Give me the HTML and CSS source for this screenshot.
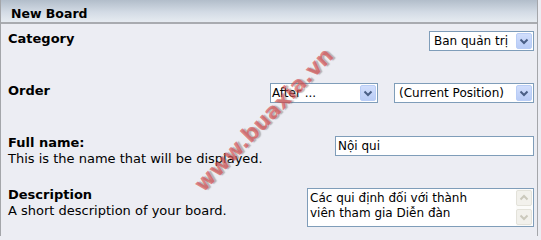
FILE: index.html
```html
<!DOCTYPE html>
<html lang="vi">
<head>
<meta charset="utf-8">
<title>New Board</title>
<link rel="stylesheet" href="styles.css">
</head>
<body>
<div class="panel">
  <div class="panel-head">New Board</div>

  <div class="row">
    <div class="label"><b>Category</b></div>
    <div class="select sel-cat"><span class="sel-text">Ban quản trị</span><span class="sel-btn"><svg width="16" height="16" viewBox="0 0 16 16"><path d="M4.5 6.5 L8 10 L11.5 6.5" fill="none" stroke="#4a5f86" stroke-width="2"/></svg></span></div>
  </div>

  <div class="row">
    <div class="label"><b>Order</b></div>
    <div class="controls">
      <div class="select sel-after"><span class="sel-text">After ...</span><span class="sel-btn"><svg width="16" height="16" viewBox="0 0 16 16"><path d="M4.5 6.5 L8 10 L11.5 6.5" fill="none" stroke="#4a5f86" stroke-width="2"/></svg></span></div>
      <div class="select sel-pos"><span class="sel-text">(Current Position)</span><span class="sel-btn"><svg width="16" height="16" viewBox="0 0 16 16"><path d="M4.5 6.5 L8 10 L11.5 6.5" fill="none" stroke="#4a5f86" stroke-width="2"/></svg></span></div>
    </div>
  </div>

  <div class="row">
    <div class="label"><b>Full name:</b><span class="hint">This is the name that will be displayed.</span></div>
    <div class="input">Nội qui</div>
  </div>

  <div class="row">
    <div class="label"><b>Description</b><span class="hint">A short description of your board.</span></div>
    <div class="textarea">
      <div class="ta-text">Các qui định đối với thành<br>viên tham gia Diễn đàn</div>
      <div class="ta-scroll">
        <span class="sb-btn"><svg width="14" height="14" viewBox="0 0 14 14"><path d="M3.5 8.5 L7 5 L10.5 8.5" fill="none" stroke="#cbc9bc" stroke-width="2"/></svg></span>
        <span class="sb-btn"><svg width="14" height="14" viewBox="0 0 14 14"><path d="M3.5 5.5 L7 9 L10.5 5.5" fill="none" stroke="#cbc9bc" stroke-width="2"/></svg></span>
      </div>
    </div>
  </div>

  <div class="watermark">www.buaxia.vn</div>
</div>
</body>
</html>
```

FILE: styles.css
```css
html, body {
  margin: 0;
  padding: 0;
  background: #ecedf3;
}

body {
  font-family: "DejaVu Sans", Verdana, sans-serif;
  color: #000;
}

.panel {
  position: relative;
  width: 538px;
  box-sizing: border-box;
  border-left: 1px solid #a4a6aa;
  border-right: 1px solid #a4a6aa;
  background: #ecedf3;
  height: 236px;
  overflow: hidden;
}

.panel-head {
  height: 24px;
  box-sizing: border-box;
  padding: 6px 0 0 10px;
  font-size: 12.5px;
  line-height: 16px;
  font-weight: bold;
  background: linear-gradient(#b2bdca, #d3dbe5 55%, #e6ebf1);
  border-bottom: 2px solid #a9abb0;
}

.row {
  display: flex;
  justify-content: space-between;
  align-items: flex-start;
  height: 52px;
  box-sizing: border-box;
  padding: 7px 3px 0 7px;
}

.label {
  display: flex;
  flex-direction: column;
  font-size: 13px;
  line-height: 16px;
}

.label b {
  font-weight: bold;
}

.hint {
  font-weight: normal;
}

.controls {
  display: flex;
  gap: 16px;
}

.select {
  display: flex;
  align-items: center;
  justify-content: space-between;
  height: 20px;
  box-sizing: border-box;
  border: 1px solid #7f9db9;
  background: #fff;
  font-size: 12px;
  line-height: 18px;
  padding-left: 4px;
}

.sel-cat { width: 105px; }
.sel-after { width: 108px; padding-left: 1px; }
.sel-pos { width: 140px; }

.sel-btn {
  display: flex;
  width: 16px;
  height: 16px;
  margin-right: 1px;
  box-sizing: border-box;
  border: 1px solid #b9cdf6;
  border-radius: 2px;
  background: linear-gradient(#d1defc, #b9ccf6);
}

.sel-btn svg {
  margin: -1px;
}

.input {
  width: 199px;
  height: 20px;
  margin-top: 1px;
  box-sizing: border-box;
  border: 1px solid #7f9db9;
  background: #fff;
  font-size: 12px;
  line-height: 16px;
  padding: 1px 2px;
}

.textarea {
  display: flex;
  justify-content: space-between;
  width: 227px;
  height: 39px;
  margin-top: 1px;
  box-sizing: border-box;
  border: 1px solid #7f9db9;
  background: #fff;
  font-size: 12px;
}

.ta-text {
  padding: 2px 0 0 2px;
  line-height: 15px;
}

.ta-scroll {
  display: flex;
  flex-direction: column;
  justify-content: space-between;
  width: 16px;
  padding: 1px 0;
  margin-right: 1px;
  background: #fbfbf9;
}

.sb-btn {
  display: flex;
  align-items: center;
  justify-content: center;
  width: 16px;
  height: 16px;
  box-sizing: border-box;
  border: 1px solid #e3e2da;
  border-radius: 2px;
  background: #f2f1ec;
}

.watermark {
  position: absolute;
  left: 163px;
  top: 107px;
  width: 200px;
  text-align: center;
  font-family: "DejaVu Sans", sans-serif;
  font-weight: bold;
  font-size: 22px;
  line-height: 26px;
  color: rgba(218, 78, 78, 0.66);
  text-shadow: 1.5px 1.5px 1px rgba(90, 90, 90, 0.4);
  transform: rotate(-46deg);
  transform-origin: 50% 50%;
  pointer-events: none;
}
```
